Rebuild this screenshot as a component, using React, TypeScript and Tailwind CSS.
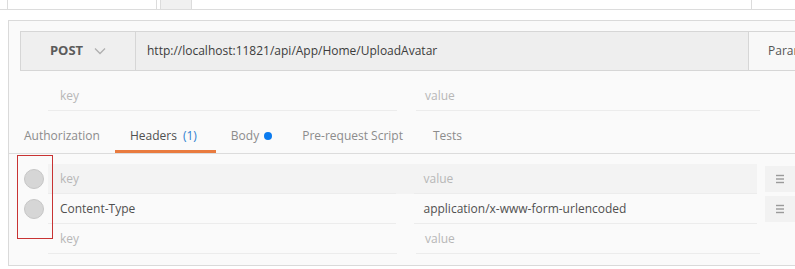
import React from 'react';

const font = { fontFamily: '"Open Sans", "Liberation Sans", sans-serif' };

function Chevron() {
    return (
        <svg width="12" height="8" viewBox="0 0 12 8" className="text-[#b0b0b0]">
            <polyline points="1,1.5 6,6.5 11,1.5" fill="none" stroke="currentColor" strokeWidth="1.3" />
        </svg>
    );
}

function DragIcon() {
    return (
        <svg width="10" height="10" viewBox="0 0 10 10" className="text-[#9a9a9a]">
            <line x1="1" y1="1.5" x2="9" y2="1.5" stroke="currentColor" strokeWidth="1.4" />
            <line x1="1" y1="5" x2="9" y2="5" stroke="currentColor" strokeWidth="1.4" />
            <line x1="1" y1="8.5" x2="9" y2="8.5" stroke="currentColor" strokeWidth="1.4" />
        </svg>
    );
}

const TABS = [
    { label: 'Authorization' },
    { label: 'Headers', count: '(1)', active: true },
    { label: 'Body', dot: true },
    { label: 'Pre-request Script' },
    { label: 'Tests' },
];

const HEADERS = [
    { key: '', value: '', hover: true, toggle: true, menu: true },
    { key: 'Content-Type', value: 'application/x-www-form-urlencoded', toggle: true, menu: true },
    { key: '', value: '' },
];

export default function App() {
    return (
        <div className="w-[795px] h-[269px] bg-white overflow-hidden text-[12px]" style={font}>
            {/* top tab strip */}
            <div className="flex h-[10px] border-b border-[#dcdcdc]">
                <div className="w-[8px] border-r border-[#dcdcdc]" />
                <div className="w-[149px] border-r border-[#dcdcdc] bg-white" />
                <div className="w-[3px]" />
                <div className="w-[32px] bg-[#f0f0f0] border-x border-[#dcdcdc]" />
                <div className="w-[560px] border-r border-[#dcdcdc]" />
                <div className="flex-1" />
            </div>

            {/* request panel */}
            <div className="relative ml-[8px] mt-[10px] h-[246px] border-l border-t border-b border-[#dadada] bg-[#fafafa]">
                {/* url bar */}
                <div className="ml-[11px] mt-[10px] flex h-[40px] w-[800px] border border-[#d6d6d6] bg-[#eeeeee]">
                    <div className="flex w-[115px] items-center justify-center gap-[11px] border-r border-[#d6d6d6] bg-[#efefef]">
                        <span className="text-[13px] font-bold text-[#5c5c5c]">POST</span>
                        <Chevron />
                    </div>
                    <div className="flex w-[612px] items-center pl-[11px] text-[#3c3c3c]">
                        http://localhost:11821/api/App/Home/UploadAvatar
                    </div>
                    <div className="flex flex-1 items-center border-l border-[#d6d6d6] bg-[#f8f8f8] pl-[19px] text-[#555]">
                        Params
                    </div>
                </div>

                {/* url params row */}
                <div className="mt-[11px] flex h-[29px] pl-[39px]">
                    <div className="flex w-[349px] items-center border-b border-[#ececec] pl-[12px] text-[#b7b7b7]">key</div>
                    <div className="w-[19px]" />
                    <div className="flex w-[344px] items-center border-b border-[#ececec] pl-[9px] text-[#b7b7b7]">value</div>
                </div>

                {/* tabs */}
                <div className="mt-[7px] flex h-[36px] border-b border-[#dcdcdc]">
                    {TABS.map((t) => (
                        <div key={t.label} className="relative flex h-[35px] items-center px-[15px]">
                            <span className={t.active ? 'text-[#505050]' : 'text-[#8c8c8c]'}>{t.label}</span>
                            {t.count && <span className="ml-[6px] mr-[4px] text-[#2f7fd0]">{t.count}</span>}
                            {t.dot && <span className="ml-[5px] h-[8px] w-[8px] rounded-full bg-[#0b7bef]" />}
                            {t.active && <span className="absolute bottom-0 left-0 right-0 h-[3px] bg-[#e97b3f]" />}
                        </div>
                    ))}
                </div>

                {/* header rows */}
                <div className="pt-[10px]">
                    {HEADERS.map((h, i) => (
                        <div key={i} className="flex h-[30px]">
                            <div className="flex w-[39px] items-center pl-[15px]">
                                {h.toggle && (
                                    <span className="h-[20px] w-[20px] rounded-full border border-[#c6c6c6] bg-[#d6d6d6]" />
                                )}
                            </div>
                            <div
                                className={`flex w-[349px] items-center border-b border-[#ececec] pl-[12px] ${h.hover ? 'bg-[#f3f3f3]' : ''} ${h.key ? 'text-[#505050]' : 'text-[#b7b7b7]'}`}
                            >
                                {h.key || 'key'}
                            </div>
                            <div className={`w-[19px] ${h.hover ? 'bg-[#f3f3f3]' : ''}`} />
                            <div
                                className={`flex w-[344px] items-center border-b border-[#ececec] pl-[9px] ${h.hover ? 'bg-[#f3f3f3]' : ''} ${h.value ? 'text-[#505050]' : 'text-[#b7b7b7]'}`}
                            >
                                {h.value || 'value'}
                            </div>
                            <div className="w-[8px]" />
                            {h.menu && (
                                <div className="my-[2px] flex w-[30px] items-center bg-[#f2f2f2] pl-[10px]">
                                    <DragIcon />
                                </div>
                            )}
                        </div>
                    ))}
                </div>

                {/* red annotation box */}
                <div className="absolute left-[8px] top-[134px] h-[84px] w-[36px] border border-[#c83333]" />
            </div>
        </div>
    );
}
